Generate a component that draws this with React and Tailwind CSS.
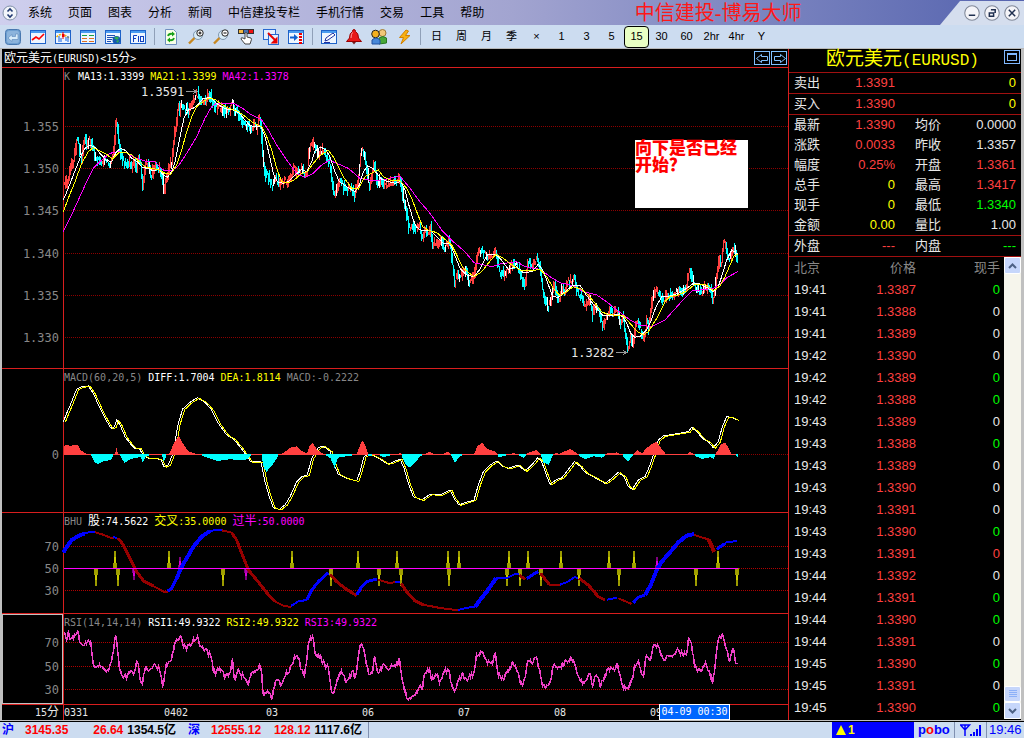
import { useMemo, useState } from "react";

const MENUS = [
  "系统",
  "页面",
  "图表",
  "分析",
  "新闻",
  "中信建投专栏",
  "手机行情",
  "交易",
  "工具",
  "帮助",
];

const PERIODS = ["日", "周", "月", "季", "×", "1", "3", "5", "15", "30", "60", "2hr", "4hr", "Y"];

const WHITE = "text-[#e8e8e8]";
const GREEN = "text-[#00ff00]";
const RED = "text-[#ff4040]";
const YELLOW = "text-[#ffff00]";

const QUOTES = [
  ["最新", "1.3390", RED, "均价", "0.0000", WHITE],
  ["涨跌", "0.0033", RED, "昨收", "1.3357", WHITE],
  ["幅度", "0.25%", RED, "开盘", "1.3361", RED],
  ["总手", "0", YELLOW, "最高", "1.3417", RED],
  ["现手", "0", YELLOW, "最低", "1.3340", GREEN],
  ["金额", "0.00", YELLOW, "量比", "1.00", WHITE],
];

const TICKS = [
  ["19:41", "1.3387", GREEN],
  ["19:41", "1.3388", WHITE],
  ["19:41", "1.3389", WHITE],
  ["19:42", "1.3390", WHITE],
  ["19:42", "1.3389", GREEN],
  ["19:42", "1.3388", GREEN],
  ["19:43", "1.3389", WHITE],
  ["19:43", "1.3388", GREEN],
  ["19:43", "1.3389", WHITE],
  ["19:43", "1.3390", WHITE],
  ["19:43", "1.3391", WHITE],
  ["19:43", "1.3390", GREEN],
  ["19:43", "1.3391", RED],
  ["19:44", "1.3392", WHITE],
  ["19:44", "1.3391", GREEN],
  ["19:44", "1.3390", GREEN],
  ["19:44", "1.3391", WHITE],
  ["19:45", "1.3390", GREEN],
  ["19:45", "1.3391", WHITE],
  ["19:45", "1.3390", GREEN],
];

// Series are kept as "x:y" samples in thirds of a pixel, in two halves,
// each half with its own origin.
const PRICE = [
  "192:365 200:345 204:340 210:310 218:295 225:250 229:215 236:250 243:285 248:235 253:215 258:240 265:225 272:235 278:260 284:285 292:285 300:290 310:285 318:290 328:295 336:270 341:240 346:165 350:190 355:240 360:270 368:290 375:300 385:290 393:305 400:290 408:305 413:285 420:300 425:360 430:340 434:300 438:300 445:295 452:340 457:310 465:300 473:315 480:320 486:340 490:395 493:350 500:335 508:290 513:300 518:240 523:200 528:170 532:115 537:140 543:120 550:130 558:130 565:145 572:120 580:100 590:85 598:105 606:105 615:108 622:90 629:90 637:115 645:130 655:125 665:130 675:140 685:135 695:115 704:145 712:140 720:165 730:180 738:185 745:175 752:200 760:180 768:190 774:165 779:165 784:230 788:290 794:335 802:330 808:350 815:365 825:340 835:360 845:355 860:345 870:335 880:310 895:325 903:310 912:330 920:320 924:265 929:240 937:225 945:250 953:275 960:260 968:255 976:275 983:285 990:310 996:370 1001:395 1010:370 1018:345 1026:360 1035:375 1045:370 1055:370 1061:400 1068:365 1074:335 1080:280 1085:250 1090:275 1095:295 1100:325 1107:365 1114:340 1120:290 1126:330 1133:365 1140:340 1148:360 1158:360 1170:350 1185:350 1199:336",
  "0:150 5:190 12:225 18:250 24:295 30:290 40:305 50:290 58:290 64:325 74:290 82:310 90:290 95:340 103:335 112:345 122:330 133:355 143:330 150:350 155:400 162:460 170:430 180:440 186:425 195:420 205:460 215:440 222:430 228:380 240:360 250:370 262:375 272:380 285:365 290:390 298:425 308:430 320:425 332:405 345:405 355:415 365:460 375:455 380:390 390:405 398:395 408:385 415:400 420:425 426:480 434:510 442:535 452:510 460:465 467:490 475:510 485:470 493:485 502:450 512:455 519:440 525:465 532:490 542:500 550:530 560:520 568:510 576:550 586:525 595:540 604:585 614:575 625:545 640:550 652:540 658:580 668:560 674:620 682:655 690:620 697:645 704:600 710:575 718:590 727:625 735:600 739:560 744:600 750:540 758:490 764:480 772:490 780:500 790:510 800:490 810:500 820:490 832:480 845:480 857:475 862:440 868:420 875:450 885:470 895:480 903:490 912:470 922:475 930:485 936:510 942:490 945:460 950:425 957:385 962:405 967:340 975:340 980:370 986:390 993:370 1000:350 1006:380 1010:400 1013:385",
];

const MA13 = [
  "190:405 205:370 220:330 240:280 255:250 270:241 285:247 300:265 318:285 335:290 348:262 362:250 378:257 395:280 412:290 428:308 445:310 460:318 475:312 490:330 502:337 515:320 525:290 540:215 552:160 565:135 580:130 595:118 610:100 632:98 645:112 660:122 680:133 700:135 718:145 735:165 750:182 770:186 783:185 795:215 808:270 820:325 832:350 848:355 865:350 885:330 905:313 920:320 935:290 945:258 962:246 978:255 990:275 1003:315 1018:350 1040:365 1065:380 1078:360 1090:320 1103:303 1118:310 1130:325 1145:343 1165:350 1185:355 1199:350",
  "3:155 15:180 28:230 40:270 50:292 65:302 90:300 105:315 130:340 150:340 162:370 180:415 200:435 222:440 238:420 262:375 285:373 300:385 325:418 350:410 370:428 395:425 415:403 428:420 440:450 458:500 475:502 490:490 515:468 540:465 555:490 570:510 590:535 610:558 635:557 650:553 668:560 680:580 692:610 705:622 722:618 740:600 752:575 768:530 785:500 810:498 835:490 860:475 880:460 900:462 925:475 940:485 955:470 968:430 980:390 995:360 1013:372",
];

const MA21 = [
  "190:440 205:400 225:350 245:295 265:260 280:248 300:258 320:268 337:283 355:264 375:262 395:270 415:287 435:305 455:310 475:314 495:325 512:328 530:300 545:255 560:200 575:155 590:125 605:113 625:100 645:103 665:118 685:130 710:137 730:150 755:170 785:185 800:215 815:255 830:310 845:350 865:354 885:343 905:325 922:320 940:295 960:272 985:256 1000:275 1015:305 1030:335 1055:370 1075:372 1095:335 1115:325 1135:315 1150:335 1170:345 1199:348",
  "3:155 20:175 35:205 50:245 68:290 85:300 110:308 135:328 155:345 170:375 190:415 222:440 245:425 265:400 288:373 310:385 335:405 360:420 390:423 420:418 440:440 460:475 480:497 500:485 520:470 545:478 565:495 585:520 605:545 625:554 670:557 690:580 710:603 730:615 745:605 770:565 795:515 810:500 835:495 860:483 885:463 915:462 940:482 960:468 975:440 990:405 1002:378 1013:372",
];

const MA42 = [
  "190:500 210:460 235:405 260:350 280:310 305:285 330:265 355:260 380:264 410:280 435:288 465:291 490:315 515:318 535:303 560:265 590:215 615:160 635:125 650:115 700:115 725:128 755:150 785:165 805:195 830:240 860:285 890:325 915:338 940:325 965:300 988:286 1015:297 1045:310 1080:340 1120:347 1150:344 1199:334",
  "0:138 30:175 60:215 90:250 125:300 160:335 195:365 222:398 275:410 300:402 350:395 375:410 420:418 450:440 480:458 520:467 550:485 590:495 620:515 650:540 690:570 720:585 755:590 795:570 840:520 875:483 940:475 960:463 980:443 1013:425",
];

const DIFF = [
  "190:170 200:145 215:110 230:72 245:65 265:63 280:85 300:130 318:165 333:190 343:185 350:165 360:180 375:215 390:235 405:250 418:250 430:272 445:280 470:280 483:285 492:305 505:300 517:270 525:230 535:175 548:132 570:112 592:98 615:112 635:135 655:175 680:210 700:222 720:245 738:270 752:290 783:290 795:350 808:395 820:428 838:433 855:420 870:395 890:350 905:335 922:330 935:280 955:248 970:243 990:258 1003:300 1015:328 1040:340 1070:348 1080:320 1092:275 1105:268 1120:272 1140:282 1160:296",
  "0:295 30:282 42:310 55:355 70:395 95:405 120:388 150:390 180:375 192:400 207:420 225:413 252:405 265:360 280:320 300:300 320:288 335:303 355:310 385:300 405:318 425:300 443:278 455:290 467:325 480:358 497:345 515:338 530:320 553:290 570:303 585:322 610:335 645:355 665:340 685:322 702:335 715:365 727:372 745:345 765:335 780:300 795:255 805:225 820:213 850:208 895:200 905:187 920:200 940:222 955:230 970:248 985:230 997:185 1010:155 1025:157 1040:165",
];

// Histogram heights, above zero first
const HIST = [
  "190:26 198:31 210:27 220:31 232:30 240:15 262:0 272:0 282:-22 293:-28 305:-20 330:-15 340:0 343:0 348:20 354:0 358:0 372:-24 390:-12 410:-8 420:-5 427:-22 435:-5 450:0 484:0 490:-20 498:0 505:0 520:35 535:58 550:30 565:10 600:0 620:-8 650:-18 690:-12 710:-15 735:-15 755:0 783:0 790:-40 798:-50 815:-30 835:0 850:8 870:22 888:26 905:12 920:5 927:28 937:37 950:15 975:0 990:-10 1002:-38 1012:-8 1040:-3 1068:0 1078:28 1085:45 1095:28 1105:-5 1125:3 1150:-6 1168:-2",
  "0:2 30:5 36:-8 45:-28 58:-38 75:-22 88:-5 100:2 118:10 130:3 155:3 173:10 183:-3 193:-24 205:-6 225:3 250:3 262:28 275:37 290:18 315:10 325:-6 345:-2 370:6 385:-2 400:-8 412:6 437:15 450:3 458:-22 475:-30 487:0 497:8 505:2 518:10 540:18 555:8 570:-5 585:-12 610:-4 635:-8 652:6 680:8 695:0 712:-20 728:0 740:16 755:4 765:18 780:30 797:40 812:20 825:4 870:4 885:1 900:10 915:-3 935:-12 960:-6 970:-12 978:8 990:30 1003:38 1015:20 1022:4 1033:4 1040:-6 1043:-10",
];

// [rising?, stroke width, samples]
const BHU = [
  [1, 4, "190:128 200:110 215:90 235:78 255:70"],
  [1, 2, "255:70 270:66 285:66"],
  [0, 2, "285:67 310:74 333:84 345:82"],
  [1, 2, "340:82 352:83"],
  [0, 3, "354:84 370:105 390:145 410:185 430:212 460:228"],
  [0, 2, "460:228 495:247 504:244"],
  [1, 3, "503:243 515:235 530:205"],
  [1, 4, "530:205 545:170 560:145 580:110 605:80 630:63"],
  [1, 2, "630:62 665:60"],
  [0, 2, "665:61 695:68"],
  [0, 3, "695:68 710:90 725:130 745:180 770:210 800:248 825:275"],
  [0, 2, "825:275 855:289 873:290"],
  [1, 2, "873:288 895:274 920:270"],
  [1, 3, "920:270 935:240 955:215 985:188"],
  [0, 3, "990:193 1010:215 1035:235 1070:257"],
  [1, 3, "1070:255 1085:230 1100:215 1130:207"],
  [0, 2, "1135:209 1165:218 1195:217"],
  [1, 2, "1186:217 1200:217"],
  [0, 3, "1203:220 1220:245 1245:273 1270:284"],
  [0, 2, "1270:284 1320:294 1375:301"],
  [1, 2, "1375:300 1400:293 1425:291"],
  [1, 4, "1425:291 1440:270 1460:245 1488:205"],
  [1, 2, "1488:205 1520:205 1545:192 1558:192"],
  [0, 3, "1558:195 1575:208"],
  [1, 3, "1580:206 1600:193 1615:185"],
  [0, 3, "1622:190 1648:224"],
  [0, 2, "1648:224 1680:224"],
  [1, 2, "1680:224 1700:217 1723:202 1735:203"],
  [0, 3, "1738:205 1765:225 1795:260 1815:270"],
  [1, 2, "1820:269 1850:263"],
  [0, 2, "1855:265 1895:282"],
  [1, 3, "1900:278 1915:262 1935:255"],
  [1, 4, "1935:255 1952:225 1970:180 1985:155 2010:127 2035:97 2060:77 2082:72"],
  [0, 2, "2082:75 2125:88"],
  [0, 4, "2125:88 2143:125"],
  [1, 3, "2150:118 2175:100"],
  [1, 2, "2175:98 2210:93"],
];

const SPIKES_UP = [346, 508, 877, 1075, 1192, 1345, 1378, 1528, 1585, 1684, 1828, 1903, 2155];
const SPIKES_DOWN = [289, 355, 670, 994, 1138, 1204, 1348, 1522, 1561, 1624, 1738, 1858, 2089, 2210];

const RSI = [
  "192:375 200:385 205:365 207:395 215:385 225:378 232:363 240:408 255:395 270:392 278:460 288:480 296:465 308:475 325:488 335:440 341:410 346:372 352:420 357:480 372:505 385:490 400:490 410:450 417:490 425:530 434:465 448:485 462:460 478:480 487:530 496:465 510:460 518:420 530:385 541:380 548:410 565:412 580:390 592:385 597:410 612:415 622:430 632:432 640:490 655:478 672:497 688:495 695:445 703:510 712:480 730:505 745:520 755:480 765:490 777:463 784:490 787:560 800:550 815:562 825:510 840:520 860:490 875:470 882:437 895:440 900:480 912:490 918:465 924:390 937:380 944:430 960:440 975:470 983:470 990:530 998:562 1010:510 1020:485 1035:510 1050:505 1057:470 1062:510 1070:470 1075:430 1083:400 1092:430 1103:485 1115:487 1122:445 1133:490 1148:470 1160:480",
  "0:468 20:465 27:440 33:500 42:540 52:572 65:560 77:550 88:520 95:540 103:490 115:475 122:510 140:490 147:515 160:490 175:475 182:520 193:550 202:510 215:495 230:505 250:495 258:440 275:425 290:455 305:460 314:430 322:495 340:505 352:485 365:460 378:475 392:525 403:510 410:450 425:460 437:440 447:480 455:525 470:535 482:500 490:465 505:480 520:460 540:445 552:455 558:490 580:525 598:490 607:525 617:490 630:525 645:500 652:470 665:480 682:465 693:520 710:543 722:520 732:470 745:460 757:505 767:440 777:455 790:400 802:410 820:445 840:430 852:435 865:415 875:435 888:430 895:380 903:405 912:465 930:490 945:460 955:480 967:515 973:470 982:390 997:375 1003:400 1010:430 1017:455 1027:415 1035:455 1042:468",
];

const parse = (text, dx, dy) =>
  text.split(" ").map((pair) => {
    const [x, y] = pair.split(":").map(Number);
    return [(x + dx) / 3, (y + dy) / 3];
  });

const join = (halves, first, second) => [
  ...parse(halves[0], first[0], first[1]),
  ...parse(halves[1], second[0], second[1]),
];

const toPath = (points) =>
  points.map(([x, y], i) => `${i ? "L" : "M"}${x.toFixed(1)} ${y.toFixed(1)}`).join("");

// One value for every pixel column
const resample = (points) => {
  const out = [];
  let k = 0;
  for (let x = Math.ceil(points[0][0]); x <= points[points.length - 1][0]; x++) {
    while (k < points.length - 2 && points[k + 1][0] < x) k++;
    const [x0, y0] = points[k];
    const [x1, y1] = points[k + 1];
    const t = x1 === x0 ? 0 : (x - x0) / (x1 - x0);
    out.push([x, y0 + (y1 - y0) * t]);
  }
  return out;
};

const makeRandom = (seed) => () => {
  seed = (seed * 16807) % 2147483647;
  return seed / 2147483647;
};

const GridLine = ({ y, color = "#8c0000" }) => (
  <line x1="63" x2="100%" y1={y + 0.5} y2={y + 0.5} stroke={color} strokeDasharray="1 1" />
);

const AxisText = ({ y, children }) => (
  <text
    x="57"
    y={y + 5}
    textAnchor="end"
    fontSize="12"
    fill="#888"
    fontFamily="'DejaVu Sans Mono', monospace"
  >
    {children}
  </text>
);

const Pane = ({ height, legend, label, children }) => (
  <section className="relative border-t border-[#d81e1e]">
    <svg className={`block w-full ${height}`} role="img" aria-label={label} shapeRendering="crispEdges">
      <line x1="61.5" x2="61.5" y1="0" y2="100%" stroke="#d81e1e" />
      {children}
    </svg>
    <div className="absolute left-[62px] top-0 flex gap-1.5 font-['DejaVu_Sans_Mono','Noto_Sans_CJK_SC',monospace] text-[10px] leading-[17px] whitespace-nowrap">
      {legend.map(([name, value, color]) => (
        <span key={name} className={color}>
          <span className={/[\u4e00-\u9fff]/.test(name) ? "text-xs leading-4" : ""}>{name}</span>
          {value}
        </span>
      ))}
    </div>
  </section>
);

const PricePane = () => {
  const { red, cyan, white } = useMemo(() => {
    const random = makeRandom(77);
    const paths = { red: "", cyan: "", white: "" };
    const values = resample(join(PRICE, [-6, -9], [1194, 186]));
    let down = false;
    values.forEach(([x, y], i) => {
      const prev = i ? values[i - 1][1] : y;
      const drift = (random() - 0.5) * 6;
      const half = 1 + random() * 4.5;
      const top = Math.min(y, prev) + drift - half;
      const bottom = Math.max(y, prev) + drift + half;
      const roll = random();
      // colours come in short runs unless the move is clear
      if (Math.abs(y - prev) > 1.5 || random() > 0.5) {
        down = y - prev + (random() - 0.5) * 2 > 0;
      }
      const key = roll > 0.9 ? "white" : down ? "cyan" : "red";
      paths[key] += `M${x + 0.5} ${top.toFixed(1)}V${bottom.toFixed(1)}`;
    });
    return paths;
  }, []);

  return (
    <Pane
      height="h-[300px]"
      label="EURUSD 15分"
      legend={[
        ["K", "", "text-[#888] mr-0.5"],
        ["MA13", ":1.3399", "text-white"],
        ["MA21", ":1.3399", "text-[#ffff00]"],
        ["MA42", ":1.3378", "text-[#ff00ff]"],
      ]}
    >
      {["1.355", "1.350", "1.345", "1.340", "1.335", "1.330"].map((price, i) => {
        const y = [58, 100, 142, 185, 227, 269][i];
        return (
          <g key={price}>
            <GridLine y={y} />
            <AxisText y={y}>{price}</AxisText>
          </g>
        );
      })}
      <g fill="none">
        <path d={red} stroke="#ff4040" />
        <path d={cyan} stroke="#00ffff" />
        <path d={white} stroke="#ffffff" />
        <path d={toPath(join(MA42, [-6, -9], [1194, 186]))} stroke="#ff00ff" />
        <path d={toPath(join(MA13, [-6, -9], [1194, 186]))} stroke="#ffffff" />
        <path d={toPath(join(MA21, [-6, -9], [1194, 186]))} stroke="#ffff00" />
        <path d="M184 23.5h11m-4-2l4 2l-4 2" stroke="#999" />
        <path d="M614 284.5h11m-4-2l4 2l-4 2" stroke="#999" />
      </g>
      <g fill="#e8e8e8" fontSize="12" fontFamily="'DejaVu Sans Mono', monospace">
        <text x="139" y="28">
          1.3591
        </text>
        <text x="569" y="289">
          1.3282
        </text>
      </g>
    </Pane>
  );
};

const MacdPane = () => {
  const diff = join(DIFF, [-6, -12], [1164, -12]);
  const bars = resample(join(HIST, [-6, 0], [1164, 0]));
  const bar = ([x, h]) => `M${x + 0.5} 86V${(86 - h).toFixed(1)}`;
  const up = bars.filter(([, h]) => h >= 0.5);
  const down = bars.filter(([, h]) => h <= -0.5);

  return (
    <Pane
      height="h-[143px]"
      label="MACD"
      legend={[
        ["MACD(60,20,5)", "", "text-[#888]"],
        ["DIFF", ":1.7004", "text-white"],
        ["DEA", ":1.8114", "text-[#ffff00]"],
        ["MACD", ":-0.2222", "text-[#888]"],
      ]}
    >
      <GridLine y={85} />
      <AxisText y={85}>0</AxisText>
      <g fill="none">
        <path d={toPath(diff)} stroke="#ffffff" />
        <path d={toPath(diff.map(([x, y]) => [x + 2, y + 0.5]))} stroke="#ffff00" />
        <path d={up.map(bar).join("")} stroke="#ff4040" />
        <path d={down.map(bar).join("")} stroke="#00ffff" />
        <path d="M62 85.5H736" stroke="#ff4040" />
        <path d={down.map(([x]) => `M${x} 85.5h1`).join("")} stroke="#00ffff" />
      </g>
    </Pane>
  );
};

const spike = (x, tip) => {
  const c = Math.round((x - 6) / 3);
  return `M${c - 1.5} 55.5L${c} ${tip}L${c + 1.5} 55.5Z`;
};

const BhuPane = () => (
  <Pane
    height="h-[100px]"
    label="BHU"
    legend={[
      ["BHU", "", "text-[#888]"],
      ["股", ":74.5622", "text-white"],
      ["交叉", ":35.0000", "text-[#ffff00]"],
      ["过半", ":50.0000", "text-[#ff00ff]"],
    ]}
  >
    {[70, 50, 30].map((level, i) => (
      <g key={level}>
        <GridLine y={[33, 55, 77][i]} color="#b00000" />
        <AxisText y={[33, 55, 77][i]}>{level}</AxisText>
      </g>
    ))}
    <path
      d={SPIKES_UP.map((x) => spike(x, 38)).join("") + SPIKES_DOWN.map((x) => spike(x, 73)).join("")}
      fill="#a0a000"
      stroke="#dede00"
      strokeWidth="0.7"
    />
    <path
      d={[541, 1972].map((x) => spike(x, 44)).join("") + [403, 739].map((x) => spike(x, 67)).join("")}
      fill="#b000b0"
      stroke="#ff00ff"
      strokeWidth="0.5"
    />
    {BHU.map(([rising, width, samples]) => (
      <path
        key={samples}
        d={toPath(parse(samples, -6, -9))}
        fill="none"
        stroke={rising ? "#0000ff" : "#960000"}
        strokeWidth={width}
      />
    ))}
    <path d="M62 55.5H736" stroke="#ff00ff" />
  </Pane>
);

const RsiPane = () => {
  const line = useMemo(() => {
    const random = makeRandom(4321);
    return resample(join(RSI, [-6, -312], [1164, -312])).map(([x, y]) => [
      x + 0.5,
      y + (random() - 0.5) * 6,
    ]);
  }, []);

  return (
    <Pane
      height="h-[90px]"
      label="RSI"
      legend={[
        ["RSI(14,14,14)", "", "text-[#888]"],
        ["RSI1", ":49.9322", "text-white"],
        ["RSI2", ":49.9322", "text-[#ffff00]"],
        ["RSI3", ":49.9322", "text-[#ff00ff]"],
      ]}
    >
      <rect x="0.5" y="0.5" width="60" height="89" fill="none" stroke="#c0c0c0" />
      {[70, 50, 30].map((level, i) => (
        <g key={level}>
          <GridLine y={[28, 52, 75][i]} color="#b00000" />
          <AxisText y={[28, 52, 75][i]}>{level}</AxisText>
        </g>
      ))}
      <path d={toPath(line)} fill="none" stroke="#f040c8" strokeWidth="1.5" />
    </Pane>
  );
};

const TimeAxis = () => (
  <div className="relative h-4 border-t border-[#d81e1e]">
    <svg className="block h-[15px] w-full" shapeRendering="crispEdges">
      <line x1="61.5" x2="61.5" y1="0" y2="100%" stroke="#d81e1e" />
      <g fill="#e8e8e8" fontSize="10" fontFamily="'DejaVu Sans Mono', 'Noto Sans CJK SC', monospace">
        <text x="57" y="11" textAnchor="end">
          15<tspan fontSize="12">分</tspan>
        </text>
        {[
          ["0331", 62],
          ["0402", 162],
          ["03", 264],
          ["06", 360],
          ["07", 456],
          ["08", 552],
          ["09", 648],
        ].map(([day, x]) => (
          <text key={day} x={x} y="11">
            {day}
          </text>
        ))}
      </g>
    </svg>
    <span className="absolute -top-px left-[657px] h-4 w-[71px] border border-white bg-[#0066ff] text-center font-['DejaVu_Sans_Mono',monospace] text-[10px] leading-[14px] text-white whitespace-nowrap">
      04-09 00:30
    </span>
  </div>
);

const Frame = ({ children }) => (
  <>
    <rect x="0.5" y="1.5" width="15" height="13" fill="#eef6ff" stroke="#1e62c8" />
    <rect x="1" y="2" width="14" height="2" fill="#4a9cf0" />
    {children}
  </>
);

const TOOL_GROUPS = [
  [
    [
      "后退",
      <>
        <rect x="0.5" y="0.5" width="15" height="15" rx="3" fill="#6f9fd0" stroke="#4878b0" />
        <rect x="2" y="2" width="12" height="12" rx="2" fill="#8cb4dc" />
        <path d="M3 9l4-3.500v2h3.500V5H13v5.500H7v2z" fill="#d8ecfa" stroke="#5a86b8" strokeWidth="0.6" />
      </>,
    ],
    [
      "分时图",
      <Frame>
        <path d="M2 11l4-3 3 2 5-5" fill="none" stroke="#f00" strokeWidth="1.6" />
      </Frame>,
    ],
    [
      "K线图",
      <Frame>
        <path d="M1.500 8q3-3 6-2.500T14 9" fill="none" stroke="#f0b000" strokeWidth="1.6" strokeDasharray="2 1" />
        <path d="M8 3v7" stroke="#e00" />
        <rect x="7" y="5" width="2.500" height="3" fill="#e00" />
        <path d="M4 7v6M6 9v4M11 8v4M13 7v6" stroke="#1060e0" />
      </Frame>,
    ],
    [
      "报价列表",
      <Frame>
        <path d="M2 6.5h5M9 6.500h5" stroke="#18a040" />
        <path d="M2 9.5h5M9 9.500h5M2 12.500h5M9 12.500h5" stroke="#e07020" />
      </Frame>,
    ],
    [
      "资讯",
      <Frame>
        <path d="M2 6.5h8M2 8.5h7M2 10.5h5M2 12.5h4" stroke="#2050b0" />
        <circle cx="11.5" cy="11" r="4" fill="#1458b0" />
        <path d="M9 9q3-3 5 0l-2 2zM11 12l3-1-1 3z" fill="#30b050" />
      </Frame>,
    ],
    [
      "F10",
      <Frame>
        <path d="M3.5 13V6.5H7M3.5 9.5h2.5M8.5 7v6" fill="none" stroke="#1040c0" />
        <rect x="10.5" y="7.5" width="3" height="5" fill="none" stroke="#1040c0" />
      </Frame>,
    ],
  ],
  [
    [
      "刷新",
      <>
        <path d="M2.5 0.5h8l3 3v12h-11z" fill="#f8ffe8" stroke="#7090c0" />
        <path d="M5 7q1-3 5-2M11 9q-1 3-5 2" fill="none" stroke="#18a018" strokeWidth="1.8" />
        <path d="M9 2.5l3 2.5-3 2.5zM7 8.500l-3 2.500 3 2.500z" fill="#18a018" />
      </>,
    ],
    [
      "放大",
      <>
        <path d="M1 14.500l6-6" stroke="#c88820" strokeWidth="2.4" />
        <circle cx="10" cy="6" r="4.500" fill="#d8ecf8" stroke="#8098b0" />
        <circle cx="12" cy="4" r="3.200" fill="#fff" stroke="#222" />
        <path d="M10.500 4h3M12 2.500v3" stroke="#000" />
      </>,
    ],
    [
      "缩小",
      <>
        <path d="M1 14.500l6-6" stroke="#c88820" strokeWidth="2.4" />
        <circle cx="10" cy="6" r="4.500" fill="#d8ecf8" stroke="#8098b0" />
        <circle cx="12" cy="4" r="3.200" fill="#fff" stroke="#222" />
        <path d="M10.500 4h3" stroke="#000" />
      </>,
    ],
    [
      "选择",
      <>
        <rect x="0.5" y="0.5" width="5" height="4" fill="#f4b840" stroke="#333" />
        <rect x="5.500" y="0.5" width="5" height="4" fill="#4870b0" stroke="#333" />
        <rect x="10.500" y="0.5" width="5" height="4" fill="#f01010" stroke="#333" />
        <path d="M7 4q1-1 2 0v4l4 1q1 1 0 3l-1 3H7l-4-5q0-2 2-1l2 1z" fill="#fff" stroke="#444" />
      </>,
    ],
    [
      "拖动",
      <>
        <rect x="0.5" y="0.5" width="12" height="10" fill="#e4f0ff" stroke="#2868d0" />
        <rect x="5.500" y="5.500" width="10" height="10" fill="#e4f0ff" stroke="#2868d0" />
        <path d="M5 4l8 8" stroke="#e80000" strokeWidth="2" />
        <path d="M14.500 7.500v7h-7z" fill="#e80000" />
      </>,
    ],
    [
      "右移",
      <Frame>
        <path d="M2 8.500h5" stroke="#1060d0" strokeWidth="2" />
        <path d="M6 5l4 3.500L6 12z" fill="#1060d0" />
        <path d="M12.500 4v11" stroke="#e00" strokeWidth="3" strokeDasharray="2 1" />
      </Frame>,
    ],
  ],
  [
    [
      "画线",
      <Frame>
        <path d="M4 12l1-3 7-5 2 2-7 5z" fill="#fff" stroke="#2030a0" />
        <path d="M3 13.500h6" stroke="#2030a0" />
      </Frame>,
    ],
    [
      "预警",
      <>
        <path d="M8 0.500q1.500 0 1.500 2Q12.500 4 12.500 9l3 3.500H0.500l3-3.500Q3.500 4 6.500 2.500q0-2 1.500-2z" fill="#e81818" stroke="#900" />
        <path d="M6.500 3.500Q5 5 5 9" fill="none" stroke="#ffa0a0" />
        <path d="M6 13h4l-2 2.500z" fill="#702020" />
      </>,
    ],
    [
      "用户",
      <>
        <circle cx="11.500" cy="4" r="3.500" fill="#f0c878" stroke="#a07830" />
        <path d="M8 15V9q4-3 7.500 0v5z" fill="#48a838" stroke="#287820" />
        <circle cx="4.500" cy="5" r="3.800" fill="#f4b020" stroke="#222" />
        <path d="M1 15v-4q4-4 8 0v4z" fill="#4888d8" stroke="#2050a0" />
      </>,
    ],
    [
      "闪电下单",
      <path key="bolt" d="M10 1L3.500 8.500h4L5 15l9-8.500H9.500L12.500 2z" fill="#f8b010" stroke="#d08000" />,
    ],
  ],
];

const Separator = () => <span className="ml-1 mr-[3px] h-[17px] w-px bg-[#90a0b8]" />;

const WINDOW_BUTTONS = [
  ["最小化", <path key="p" d="M4.500 9.500h6" />],
  ["还原", <path key="p" d="M6.500 4.500h4v3M5 7.500h4v3H5z" />],
  ["关闭", <path key="p" d="M4.500 4.500l6 6M10.500 4.500l-6 6" />],
];

const Header = () => (
  <header className="flex h-[25px] items-center bg-linear-to-r from-[#cfcfee] via-[#a2a4d0] to-[#5563ae] pl-[2px]">
    <button aria-label="博易大师" className="mr-2.5 size-4 shrink-0">
      <svg viewBox="0 0 16 16" className="size-4">
        <circle cx="8" cy="8" r="7" fill="#f2f5fa" stroke="#8090a8" />
        <path d="M5.500 6.500L8 4l2.500 2.500M5.500 9.500L8 12l2.500-2.500" fill="none" stroke="#203870" strokeWidth="1.600" />
      </svg>
    </button>
    <nav className="flex shrink-0 gap-4 text-xs">
      {MENUS.map((menu) => (
        <a key={menu} href="#" className="text-black">
          {menu}
        </a>
      ))}
    </nav>
    <h1 className="flex-1 pl-3 text-center font-['Liberation_Serif','Noto_Sans_CJK_SC',serif] text-xl leading-6 font-normal text-[#ff1818]">
      中信建投-博易大师
    </h1>
    <div className="flex h-full w-[84px] items-center justify-end gap-1 bg-[#d5deee] pr-1 [clip-path:polygon(0_100%,20px_4%,100%_4%,100%_100%)]">
      {WINDOW_BUTTONS.map(([label, glyph]) => (
        <button key={label} aria-label={label} className="size-4">
          <svg viewBox="0 0 15 15" className="size-4" fill="none" stroke="#203050" strokeWidth="1.400">
            <circle cx="7.500" cy="7.500" r="6.800" fill="#f4f4f8" stroke="#808898" strokeWidth="1" />
            {glyph}
          </svg>
        </button>
      ))}
    </div>
  </header>
);

const Toolbar = ({ period, onPeriod }) => (
  <div className="flex h-6 items-center overflow-hidden border-b border-[#b8b8b8] bg-[#ccdcf0]">
    {TOOL_GROUPS.map((group, g) => (
      <div key={g} className="flex shrink-0 items-center">
        {group.map(([label, icon]) => (
          <button key={label} aria-label={label} className="flex w-[25px] justify-center">
            <svg viewBox="0 0 16 16" className="size-4">
              {icon}
            </svg>
          </button>
        ))}
        <Separator />
      </div>
    ))}
    {PERIODS.map((name) => (
      <button
        key={name}
        onClick={() => onPeriod(name)}
        className={
          name === period
            ? "h-[22px] w-[25px] shrink-0 rounded border border-black bg-[#e9ffc4] text-[11px]"
            : "h-[22px] w-[25px] shrink-0 text-[11px] whitespace-nowrap"
        }
      >
        {name}
      </button>
    ))}
  </div>
);

const ChartArea = () => (
  <div className="relative min-w-0 flex-1 overflow-hidden">
    <div className="flex h-[18px] items-center justify-between">
      <h2 className="pl-0.5 font-['DejaVu_Sans_Mono','Noto_Sans_CJK_SC',monospace] text-[10px] leading-4 text-white">
        <span className="text-xs leading-4">欧元美元</span>(EURUSD)&lt;15
        <span className="text-xs leading-4">分</span>&gt;
      </h2>
      <div className="flex">
        {["M2.500 7.500l5-4v2h6v4h-6v2z", "M14.500 7.500l-5-4v2h-6v4h6v2z"].map((d, i) => (
          <button key={d} aria-label={i ? "下一个" : "上一个"}>
            <svg viewBox="0 0 17 15" className="h-[15px] w-[17px]" fill="none" stroke="#80c0ff">
              <rect x="0.5" y="0.5" width="15" height="13" />
              <path d={d} />
            </svg>
          </button>
        ))}
      </div>
    </div>
    <PricePane />
    <MacdPane />
    <BhuPane />
    <RsiPane />
    <TimeAxis />
    <p className="absolute left-[633px] top-[91px] h-[68px] w-[113px] bg-white text-[17px] leading-[17px] font-black text-[#ff0000]">
      向下是否已经
      <br />
      开始？
    </p>
  </div>
);

const Field = ({ label, value, color }) => (
  <div className="flex justify-between">
    <dt>{label}</dt>
    <dd className={color}>{value}</dd>
  </div>
);

const ROW = "grid grid-cols-[101px_1fr] gap-x-5 px-[5px] leading-5";

const QuotePanel = () => (
  <aside className="w-[233px] shrink-0 border-l border-[#d81e1e] text-[13px] text-[#e8e8e8]">
    <div className="flex h-[23px] items-center justify-between">
      <h2 className="flex-1 pl-3 text-center font-['Liberation_Mono','Noto_Sans_CJK_SC',monospace] text-base leading-[23px] text-[#ffff00] whitespace-nowrap">
        <span className="text-[19px] leading-[23px]">欧元美元</span>(EURUSD)
      </h2>
      <button aria-label="最大化" className="mb-1.5">
        <svg viewBox="0 0 17 15" className="h-[15px] w-[17px]" fill="none" stroke="#80b8ff">
          <rect x="0.5" y="0.5" width="15" height="13" />
          <rect x="3.500" y="3.500" width="9" height="7" />
          <path d="M3.500 4.500h9" />
        </svg>
      </button>
    </div>
    <dl className={`${ROW} border-t border-[#a01010]`}>
      <Field label="卖出" value="1.3391" color={RED} />
      <dd className="text-right text-[#ffff00]">0</dd>
    </dl>
    <dl className={`${ROW} border-t border-[#a01010]`}>
      <Field label="买入" value="1.3390" color={RED} />
      <dd className="text-right text-[#ffff00]">0</dd>
    </dl>
    <dl className={`${ROW} border-t border-[#a01010]`}>
      {QUOTES.map(([label, value, color, label2, value2, color2]) => [
        <Field key={label} label={label} value={value} color={color} />,
        <Field key={label2} label={label2} value={value2} color={color2} />,
      ])}
    </dl>
    <dl className={`${ROW} border-t border-[#a01010]`}>
      <Field label="外盘" value="---" color={RED} />
      <Field label="内盘" value="---" color={GREEN} />
    </dl>
    <div className="flex border-t border-[#a01010]">
      <table className="flex-1 table-fixed">
        <thead>
          <tr className="h-[22px] text-[#888]">
            <th className="w-[60px] p-0 pl-[5px] text-left font-normal">北京</th>
            <th className="w-[67px] p-0 text-right font-normal">价格</th>
            <th className="p-0 pr-1 text-right font-normal">现手</th>
          </tr>
        </thead>
        <tbody>
          {TICKS.map(([time, price, color], i) => (
            <tr key={i} className="h-[22px]">
              <td className="p-0 pl-[5px]">{time}</td>
              <td className="p-0 text-right text-[#ff4040]">{price}</td>
              <td className={`p-0 pr-1 text-right ${color}`}>0</td>
            </tr>
          ))}
        </tbody>
      </table>
      <div className="flex w-[17px] flex-col bg-[#f6f5ec]">
        <button aria-label="向上" className="flex h-[17px] items-center justify-center rounded-xs border border-white bg-[#c6d6fb]">
          <svg viewBox="0 0 9 6" className="h-1.5 w-[9px]" fill="none" stroke="#4d6185" strokeWidth="2">
            <path d="M1 5l3.500-3.500L8 5" />
          </svg>
        </button>
        <span className="flex-1" />
        <button aria-label="滚动条" className="flex h-4 items-center justify-center rounded-xs border border-white bg-[#c6d6fb]">
          <svg viewBox="0 0 8 8" className="size-2" stroke="#8cb0f8">
            <path d="M0 0.500h8M0 2.500h8M0 4.500h8M0 6.500h8" />
          </svg>
        </button>
        <button aria-label="向下" className="flex h-[17px] items-center justify-center rounded-xs border border-white bg-[#c6d6fb]">
          <svg viewBox="0 0 9 6" className="h-1.5 w-[9px]" fill="none" stroke="#4d6185" strokeWidth="2">
            <path d="M1 1l3.500 3.500L8 1" />
          </svg>
        </button>
      </div>
    </div>
  </aside>
);

const IndexQuote = ({ name, value, change, amount }) => (
  <div className="flex w-[174px] shrink-0">
    <span className="w-[23px] text-[#0000ff]">{name}</span>
    <span className="text-[#ff0000]">{value}</span>
    <span className="ml-auto text-[#ff0000]">{change}</span>
    <span className="pl-1 text-black">{amount}</span>
  </div>
);

const StatusBar = () => (
  <footer className="flex h-[18px] border-t border-[#c0c0c0] bg-black pt-px text-xs leading-4 font-bold">
    <div className="flex flex-1 bg-[#ccdcf0] pl-0.5 whitespace-nowrap">
      <IndexQuote name="沪" value="3145.35" change="26.64" amount="1354.5亿" />
      <div className="ml-3 border-r border-[#8090b0] pr-1.5">
        <IndexQuote name="深" value="12555.12" change="128.12" amount="1117.6亿" />
      </div>
      <div className="ml-auto flex w-[82px] items-center gap-0.5 bg-[#0000ff] pl-1 text-[#ffff00]">
        <svg viewBox="0 0 10 10" className="size-2.5" fill="#ffff00">
          <path d="M5 0l5 10H0z" />
        </svg>
        1
      </div>
      <div className="w-[41px] border-r border-[#8090b0] pl-1 text-[13px] leading-4 text-[#0000ff]">
        p<span className="text-[#ff0000]">o</span>bo
      </div>
      <div className="flex w-8 items-center justify-center border-r border-[#8090b0]">
        <svg viewBox="0 0 21 12" className="h-3 w-[21px]" fill="none" stroke="#0000ff" strokeWidth="1.500">
          <path d="M0.500 1h9L5 6zM5 1v11" />
          <path d="M11 12v-2M14 12V8M17 12V5M20 12V1" strokeWidth="2" />
        </svg>
      </div>
      <time className="w-[37px] pl-0.5 text-[13px] leading-4 font-normal text-[#0000ff]">19:46</time>
    </div>
  </footer>
);

export default function App() {
  const [period, setPeriod] = useState("15");

  return (
    <div className="flex min-h-screen flex-col bg-black font-['Liberation_Sans','Noto_Sans_CJK_SC',sans-serif]">
      <Header />
      <Toolbar period={period} onPeriod={setPeriod} />
      <main className="flex flex-1 border-l-2 border-r-3 border-[#c0c0c0]">
        <ChartArea />
        <QuotePanel />
      </main>
      <StatusBar />
    </div>
  );
}
